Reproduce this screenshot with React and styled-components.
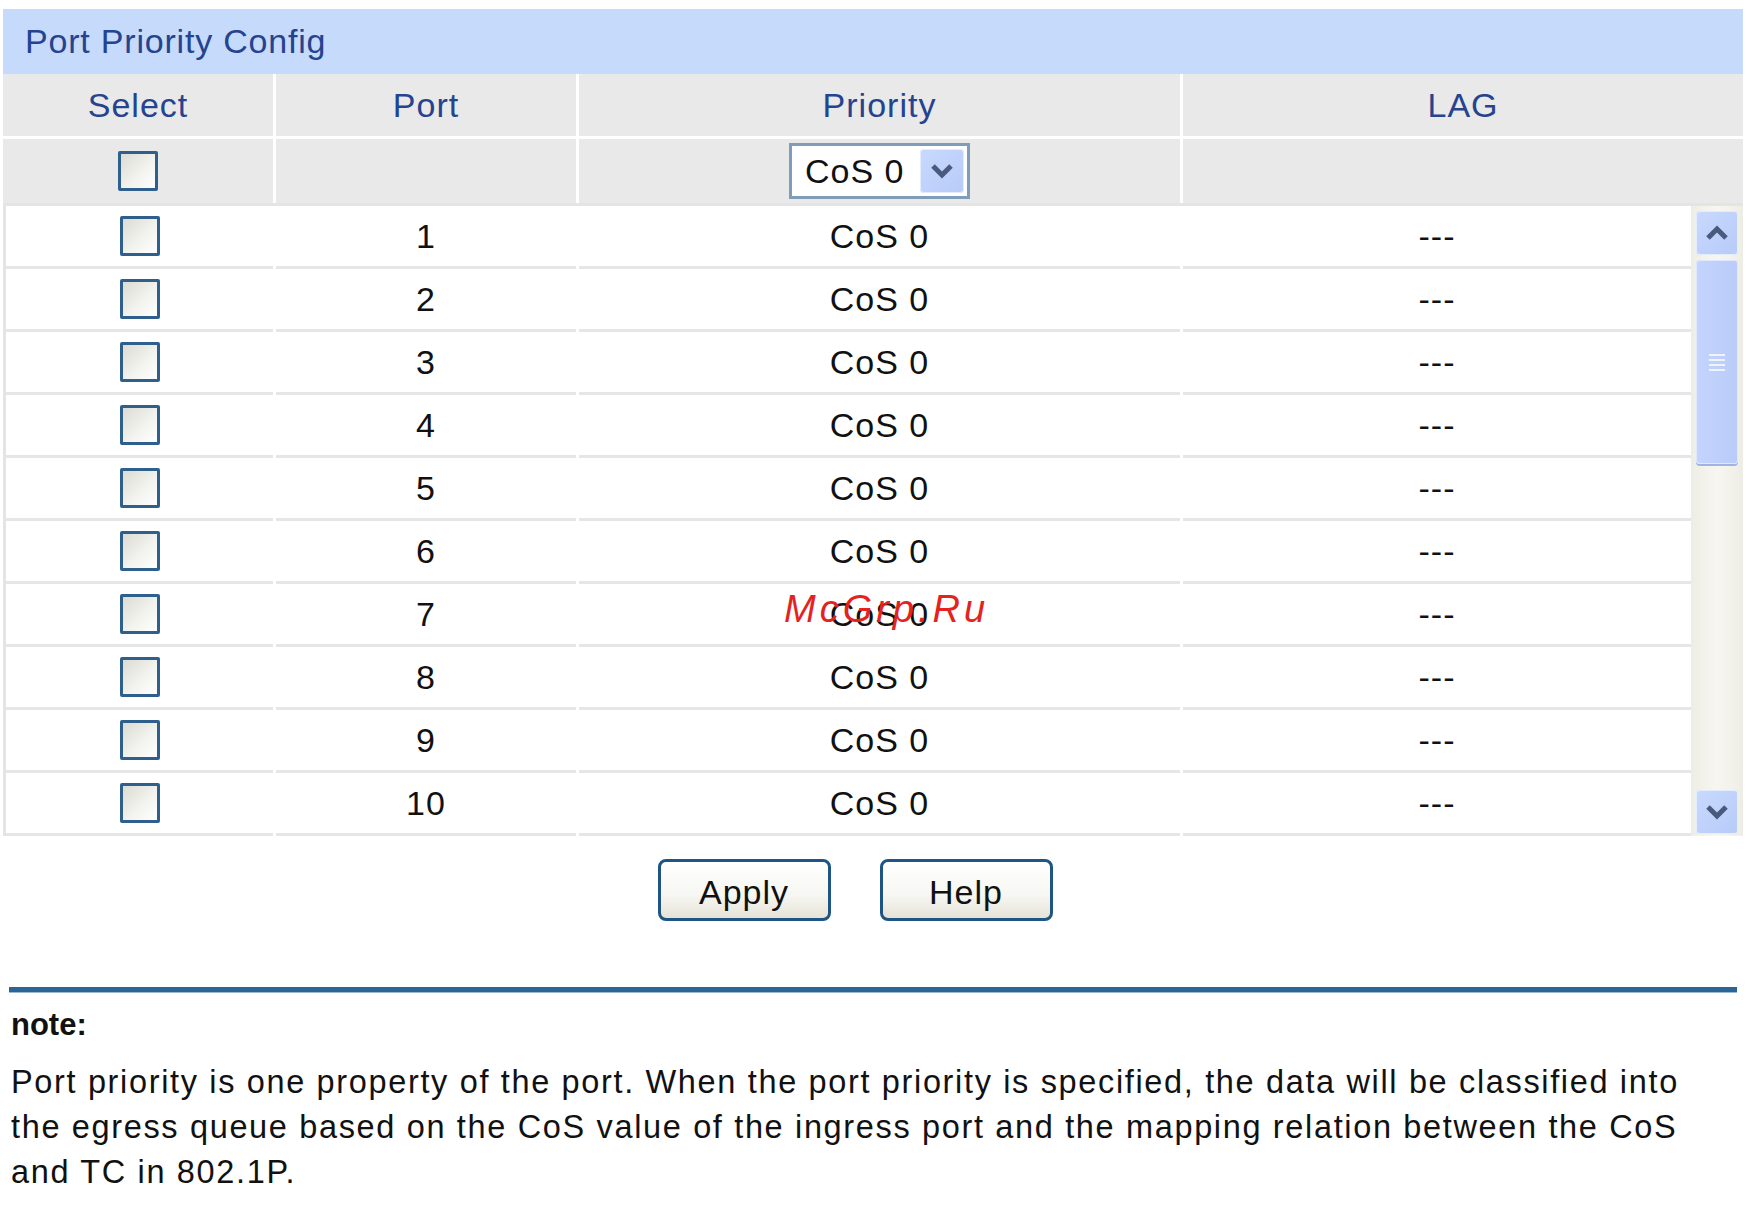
import React from "react";
import styled, { createGlobalStyle } from "styled-components";

const GlobalStyle = createGlobalStyle`
  body {
    margin: 0;
    background: #ffffff;
    font-family: "Liberation Sans", Arial, sans-serif;
  }
`;

const ports = [1, 2, 3, 4, 5, 6, 7, 8, 9, 10];

const noteLines = [
  "Port priority is one property of the port. When the port priority is specified, the data will be classified into",
  "the egress queue based on the CoS value of the ingress port and the mapping relation between the CoS",
  "and TC in 802.1P.",
];

const Page = styled.div`
  position: relative;
  width: 1740px;
  padding: 9px 0 0 3px;
`;

const TitleBar = styled.div`
  height: 65px;
  background: #c6dafc;
  color: #25438f;
  font-size: 34px;
  letter-spacing: 0.8px;
  display: flex;
  align-items: center;
  padding-left: 22px;
`;

const HeadRow = styled.div`
  display: grid;
  grid-template-columns: 270px 300px 601px 1fr;
  column-gap: 3px;
  background: #ffffff;
  height: ${(p) => p.$h}px;
  border-bottom: 3px solid ${(p) => p.$line};
`;

const HeadCell = styled.div`
  background: #e9e9e9;
  color: #25438f;
  font-size: 34px;
  letter-spacing: 1px;
  display: flex;
  align-items: center;
  justify-content: center;
`;

const Body = styled.div`
  display: flex;
`;

const RowList = styled.div`
  flex: 1;
  border-left: 3px solid #e4e4e4;
`;

const DataRow = styled.div`
  display: grid;
  grid-template-columns: 267px 300px 601px 1fr;
  column-gap: 3px;
  height: 63px;
`;

const DataCell = styled.div`
  background: #ffffff;
  border-bottom: 3px solid #e6e6e6;
  color: #111111;
  font-size: 34px;
  letter-spacing: 1px;
  display: flex;
  align-items: center;
  justify-content: center;
`;

const Box = styled.span`
  display: inline-block;
  width: 34px;
  height: 34px;
  border: 3px solid #2f5f8d;
  border-radius: 2px;
  background: linear-gradient(135deg, #dcdcd4 0%, #f2f2ee 55%, #ffffff 100%);
`;

const Select = styled.div`
  box-sizing: border-box;
  width: 181px;
  height: 56px;
  border: 3px solid #7f9db9;
  background: #ffffff;
  display: flex;
  align-items: center;
  justify-content: space-between;
  padding: 0 3px 0 13px;
  color: #111111;
  font-size: 34px;
  letter-spacing: 1px;
`;

const ArrowButton = styled.span`
  width: ${(p) => p.$w || 42}px;
  height: ${(p) => p.$h || 44}px;
  border-radius: 4px;
  background: linear-gradient(135deg, #c9d9fd 0%, #b7cbf9 100%);
  box-shadow: inset 0 0 0 1px #e4ecff;
  display: flex;
  align-items: center;
  justify-content: center;
  flex: none;
`;

const ScrollBar = styled.div`
  width: 52px;
  background: linear-gradient(90deg, #eeede5, #f7f6f1 50%, #eeede5);
  display: flex;
  flex-direction: column;
  align-items: center;
  padding: 5px 0 2px;
  box-sizing: border-box;
`;

const Thumb = styled.div`
  width: 42px;
  height: 204px;
  margin-top: 5px;
  border-radius: 4px;
  background: linear-gradient(90deg, #c4d4fd, #b9cbf9);
  box-shadow: inset 0 0 0 1px #dfe8ff, 0 2px 0 #9fb4e2;
  display: flex;
  align-items: center;
  justify-content: center;
`;

const Spacer = styled.div`
  flex: 1;
`;

const ButtonBar = styled.div`
  display: flex;
  justify-content: center;
  gap: 49px;
  padding: 23px 36px 0 0;
`;

const Button = styled.button`
  width: 173px;
  height: 62px;
  border: 3px solid #1f5585;
  border-radius: 8px;
  background: linear-gradient(180deg, #ffffff 0%, #f6f6f2 60%, #e6e3d6 100%);
  font-family: "Liberation Sans", Arial, sans-serif;
  font-size: 34px;
  letter-spacing: 1px;
  color: #111111;
  padding-top: 6px;
`;

const Rule = styled.div`
  margin: 66px 6px 0 6px;
  height: 5px;
  background: #2a6596;
  box-shadow: 0 1px 0 #9dbad3;
`;

const NoteTitle = styled.div`
  margin: 15px 0 0 8px;
  font-size: 31px;
  font-weight: bold;
  color: #111111;
`;

const NoteText = styled.div`
  margin: 17px 0 0 8px;
  font-size: 32.5px;
  line-height: 45px;
  color: #111111;
  letter-spacing: 1.65px;
`;

const NoteLine = styled.div`
  white-space: nowrap;
`;

const Watermark = styled.div`
  position: absolute;
  left: 784px;
  top: 588px;
  color: #e5231e;
  font-size: 38px;
  font-style: italic;
  letter-spacing: 4px;
`;

function Chevron({ up }) {
  return (
    <svg width="24" height="16" viewBox="0 0 24 16">
      <polyline
        points={up ? "3,13 12,4 21,13" : "3,3 12,12 21,3"}
        fill="none"
        stroke="#4a5a7e"
        strokeWidth="5"
      />
    </svg>
  );
}

function Gripper() {
  return (
    <svg width="20" height="20" viewBox="0 0 20 20">
      {[3, 8, 13, 18].map((y) => (
        <line key={y} x1="2" x2="18" y1={y} y2={y} stroke="#eef3ff" strokeWidth="2" />
      ))}
    </svg>
  );
}

export default function App() {
  return (
    <>
      <GlobalStyle />
      <Page>
        <TitleBar>Port Priority Config</TitleBar>
        <HeadRow $h={62} $line="#ffffff">
          <HeadCell>Select</HeadCell>
          <HeadCell>Port</HeadCell>
          <HeadCell>Priority</HeadCell>
          <HeadCell>LAG</HeadCell>
        </HeadRow>
        <HeadRow $h={64} $line="#e4e4e4">
          <HeadCell>
            <Box />
          </HeadCell>
          <HeadCell />
          <HeadCell>
            <Select>
              CoS 0
              <ArrowButton $w={44} $h={44}>
                <Chevron />
              </ArrowButton>
            </Select>
          </HeadCell>
          <HeadCell />
        </HeadRow>
        <Body>
          <RowList>
            {ports.map((p) => (
              <DataRow key={p}>
                <DataCell>
                  <Box />
                </DataCell>
                <DataCell>{p}</DataCell>
                <DataCell>CoS 0</DataCell>
                <DataCell>---</DataCell>
              </DataRow>
            ))}
          </RowList>
          <ScrollBar>
            <ArrowButton>
              <Chevron up />
            </ArrowButton>
            <Thumb>
              <Gripper />
            </Thumb>
            <Spacer />
            <ArrowButton>
              <Chevron />
            </ArrowButton>
          </ScrollBar>
        </Body>
        <ButtonBar>
          <Button>Apply</Button>
          <Button>Help</Button>
        </ButtonBar>
        <Rule />
        <NoteTitle>note:</NoteTitle>
        <NoteText>
          {noteLines.map((line) => (
            <NoteLine key={line}>{line}</NoteLine>
          ))}
        </NoteText>
        <Watermark>McGrp.Ru</Watermark>
      </Page>
    </>
  );
}
